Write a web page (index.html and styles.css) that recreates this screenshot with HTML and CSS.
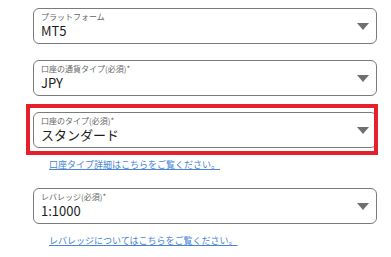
FILE: index.html
```html
<!DOCTYPE html>
<html lang="ja">
<head>
<meta charset="utf-8">
<link rel="stylesheet" href="styles.css">
</head>
<body>
<div class="form">
  <div class="field">
    <div class="select">
      <div class="label">プラットフォーム</div>
      <div class="value">MT5</div>
      <span class="arrow"></span>
    </div>
  </div>
  <div class="field">
    <div class="select">
      <div class="label">口座の通貨タイプ(必須)*</div>
      <div class="value">JPY</div>
      <span class="arrow"></span>
    </div>
  </div>
  <div class="field with-help">
    <div class="select">
      <div class="label">口座のタイプ(必須)*</div>
      <div class="value">スタンダード</div>
      <span class="arrow"></span>
    </div>
    <div class="highlight"></div>
  </div>
  <a class="help" href="#">口座タイプ詳細はこちらをご覧ください。</a>
  <div class="field with-help">
    <div class="select">
      <div class="label">レバレッジ(必須)*</div>
      <div class="value">1:1000</div>
      <span class="arrow"></span>
    </div>
  </div>
  <a class="help" href="#">レバレッジについてはこちらをご覧ください。</a>
</div>
</body>
</html>
```

FILE: styles.css
```css
html, body {
  margin: 0;
  padding: 0;
  background: #ffffff;
}
body {
  font-family: "Noto Sans CJK JP", "Noto Sans", sans-serif;
  width: 391px;
  height: 257px;
  overflow: hidden;
}
.form {
  display: flex;
  flex-direction: column;
  align-items: flex-start;
  padding: 8px 0 0 33px;
}
.field {
  position: relative;
  width: 344px;
  margin-bottom: 16px;
}
.field.with-help {
  margin-bottom: 0;
}
.select {
  position: relative;
  box-sizing: border-box;
  height: 36px;
  border: 1px solid #7b7b7b;
  border-radius: 6px;
  padding: 3px 30px 0 7px;
  background: #fff;
}
.label {
  font-size: 8px;
  line-height: 10px;
  color: #666;
  white-space: nowrap;
}
.value {
  font-size: 13px;
  line-height: 18px;
  color: #1e1e1e;
  white-space: nowrap;
}
.arrow {
  position: absolute;
  right: 7px;
  top: 14px;
  width: 0;
  height: 0;
  border-left: 6px solid transparent;
  border-right: 6px solid transparent;
  border-top: 7px solid #6f6f6f;
}
.highlight {
  position: absolute;
  left: -7px;
  top: -8px;
  width: 352px;
  height: 51px;
  box-sizing: border-box;
  border: 4px solid #e3202b;
  pointer-events: none;
}
.help {
  display: block;
  font-size: 9px;
  line-height: 14px;
  height: 14px;
  color: #4a84d6;
  text-decoration: underline;
  margin: 10px 0 16px 16px;
  white-space: nowrap;
}
.help:last-child {
  margin-bottom: 0;
}
```
